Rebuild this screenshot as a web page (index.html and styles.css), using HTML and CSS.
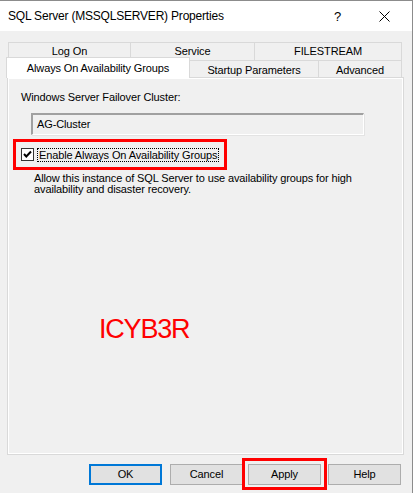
FILE: index.html
```html
<!DOCTYPE html>
<html>
<head>
<meta charset="utf-8">
<link rel="stylesheet" href="styles.css">
</head>
<body>
<div class="window">
  <div class="titlebar">
    <span class="title">SQL Server (MSSQLSERVER) Properties</span>
    <span class="help">?</span>
    <span class="close">
      <svg width="11" height="11" viewBox="0 0 11 11"><path d="M0.5 0.5 L10.5 10.5 M10.5 0.5 L0.5 10.5" stroke="#000" stroke-width="1" fill="none"/></svg>
    </span>
  </div>
  <div class="body">
    <div class="tabs">
      <div class="tabrow back">
        <div class="tab w-logon">Log On</div>
        <div class="tab w-service">Service</div>
        <div class="tab w-file">FILESTREAM</div>
      </div>
      <div class="tabrow front">
        <div class="tab selected w-always">Always On Availability Groups</div>
        <div class="tab w-startup">Startup Parameters</div>
        <div class="tab w-adv">Advanced</div>
      </div>
    </div>
    <div class="panel">
      <div class="label">Windows Server Failover Cluster:</div>
      <div class="textbox">AG-Cluster</div>
      <div class="highlight check-hl">
        <span class="checkbox">
          <svg width="11" height="11" viewBox="0 0 11 11"><path d="M2 5 L4.3 7.5 L9 2.5" stroke="#000" stroke-width="2" fill="none"/></svg>
        </span>
        <span class="check-label">Enable Always On Availability Groups</span>
      </div>
      <div class="desc">Allow this instance of SQL Server to use availability groups for high availability and disaster recovery.</div>
      <div class="watermark">ICYB3R</div>
    </div>
    <div class="buttons">
      <button class="btn default">OK</button>
      <button class="btn">Cancel</button>
      <span class="highlight apply-hl"><button class="btn">Apply</button></span>
      <button class="btn">Help</button>
    </div>
  </div>
</div>
</body>
</html>
```
FILE: styles.css
```css
* { box-sizing: border-box; }
html, body { margin: 0; padding: 0; }
body {
  width: 413px;
  height: 493px;
  overflow: hidden;
  background: #f0f0f0;
  font-family: "Liberation Sans", Arial, sans-serif;
  font-size: 11px;
  letter-spacing: -0.12px;
  color: #000;
}
.window {
  width: 413px;
  height: 493px;
  border-top: 1px solid #8c8c8c;
  border-right: 1px solid #8c8c8c;
  display: flex;
  flex-direction: column;
}
.titlebar {
  height: 30px;
  background: #fff;
  display: flex;
  align-items: center;
  padding-left: 8px;
  font-size: 12px;
  letter-spacing: -0.2px;
}
.title { flex: 1; }
.help { width: 14px; margin-right: 31px; font-size: 13px; }
.close { width: 11px; margin-right: 22px; display: flex; }
.body {
  flex: 1;
  padding: 11px 0 0 7px;
  display: flex;
  flex-direction: column;
}
.tabs { display: flex; flex-direction: column; }
.tabrow { display: flex; }
.tabrow.back { height: 18px; margin-left: 1px; }
.tabrow.front { height: 20px; align-items: flex-end; margin-top: -3px; }
.tab {
  border: 1px solid #d9d9d9;
  border-bottom: none;
  background: #f0f0f0;
  display: flex;
  align-items: center;
  justify-content: center;
  margin-right: -1px;
}
.back .tab { height: 18px; padding-bottom: 2px; }
.front .tab { height: 17px; padding-top: 2px; }
.front .tab.selected {
  height: 21px;
  background: #fff;
  margin-left: -1px;
  margin-bottom: -1px;
  position: relative;
  z-index: 2;
  padding: 0 0 1px;
}
.w-logon { width: 123px; }
.w-service { width: 125px; }
.w-file { width: 148px; }
.w-always { width: 184px; }
.w-startup { width: 130px; }
.w-adv { width: 84px; }
.panel {
  width: 397px;
  height: 378px;
  border: 1px solid #d9d9d9;
  box-shadow: inset 1px 1px 0 #fff, inset -1px -1px 0 #fff;
  position: relative;
  z-index: 1;
  padding: 13px 0 0 13px;
  display: flex;
  flex-direction: column;
}
.label { height: 13px; line-height: 13px; }
.textbox {
  margin: 9px 0 0 10px;
  width: 333px;
  height: 22px;
  border-top: 2px solid #a0a0a0;
  border-left: 2px solid #a0a0a0;
  border-right: 1px solid #fff;
  border-bottom: 1px solid #fff;
  box-shadow: 1px 1px 0 #e3e3e3;
  padding: 2px 0 0 4px;
  line-height: 15px;
}
.highlight { border: 3px solid #ff0000; }
.check-hl {
  margin: 4px 0 0 -8px;
  width: 214px;
  height: 31px;
  display: flex;
  align-items: center;
  padding-left: 5px;
}
.checkbox {
  width: 13px;
  height: 13px;
  border: 1px solid #333;
  background: #fff;
  display: flex;
  align-items: center;
  justify-content: center;
}
.check-label {
  margin-left: 3px;
  border: 1px dotted #000;
  padding: 0 1px;
  line-height: 12px;
}
.desc {
  margin: 3px 0 0 13px;
  width: 340px;
  line-height: 11px;
}
.watermark {
  margin: 119px 0 0 78px;
  color: #ff0000;
  font-size: 27px;
  letter-spacing: -1.2px;
  line-height: 30px;
}
.buttons {
  display: flex;
  align-items: center;
  margin-top: 3px;
  padding-left: 82px;
  height: 32px;
}
.btn {
  width: 73px;
  height: 21px;
  background: #e1e1e1;
  border: 1px solid #adadad;
  font-family: "Liberation Sans", Arial, sans-serif;
  font-size: 11px;
  letter-spacing: -0.12px;
  color: #000;
  padding: 0;
  margin-right: 8px;
}
.btn.default { border: 2px solid #0078d7; }
.apply-hl {
  width: 85px;
  height: 32px;
  margin-left: -9px;
  margin-right: 1px;
  display: flex;
  align-items: center;
  justify-content: center;
}
.apply-hl .btn { margin: 0; }
```
